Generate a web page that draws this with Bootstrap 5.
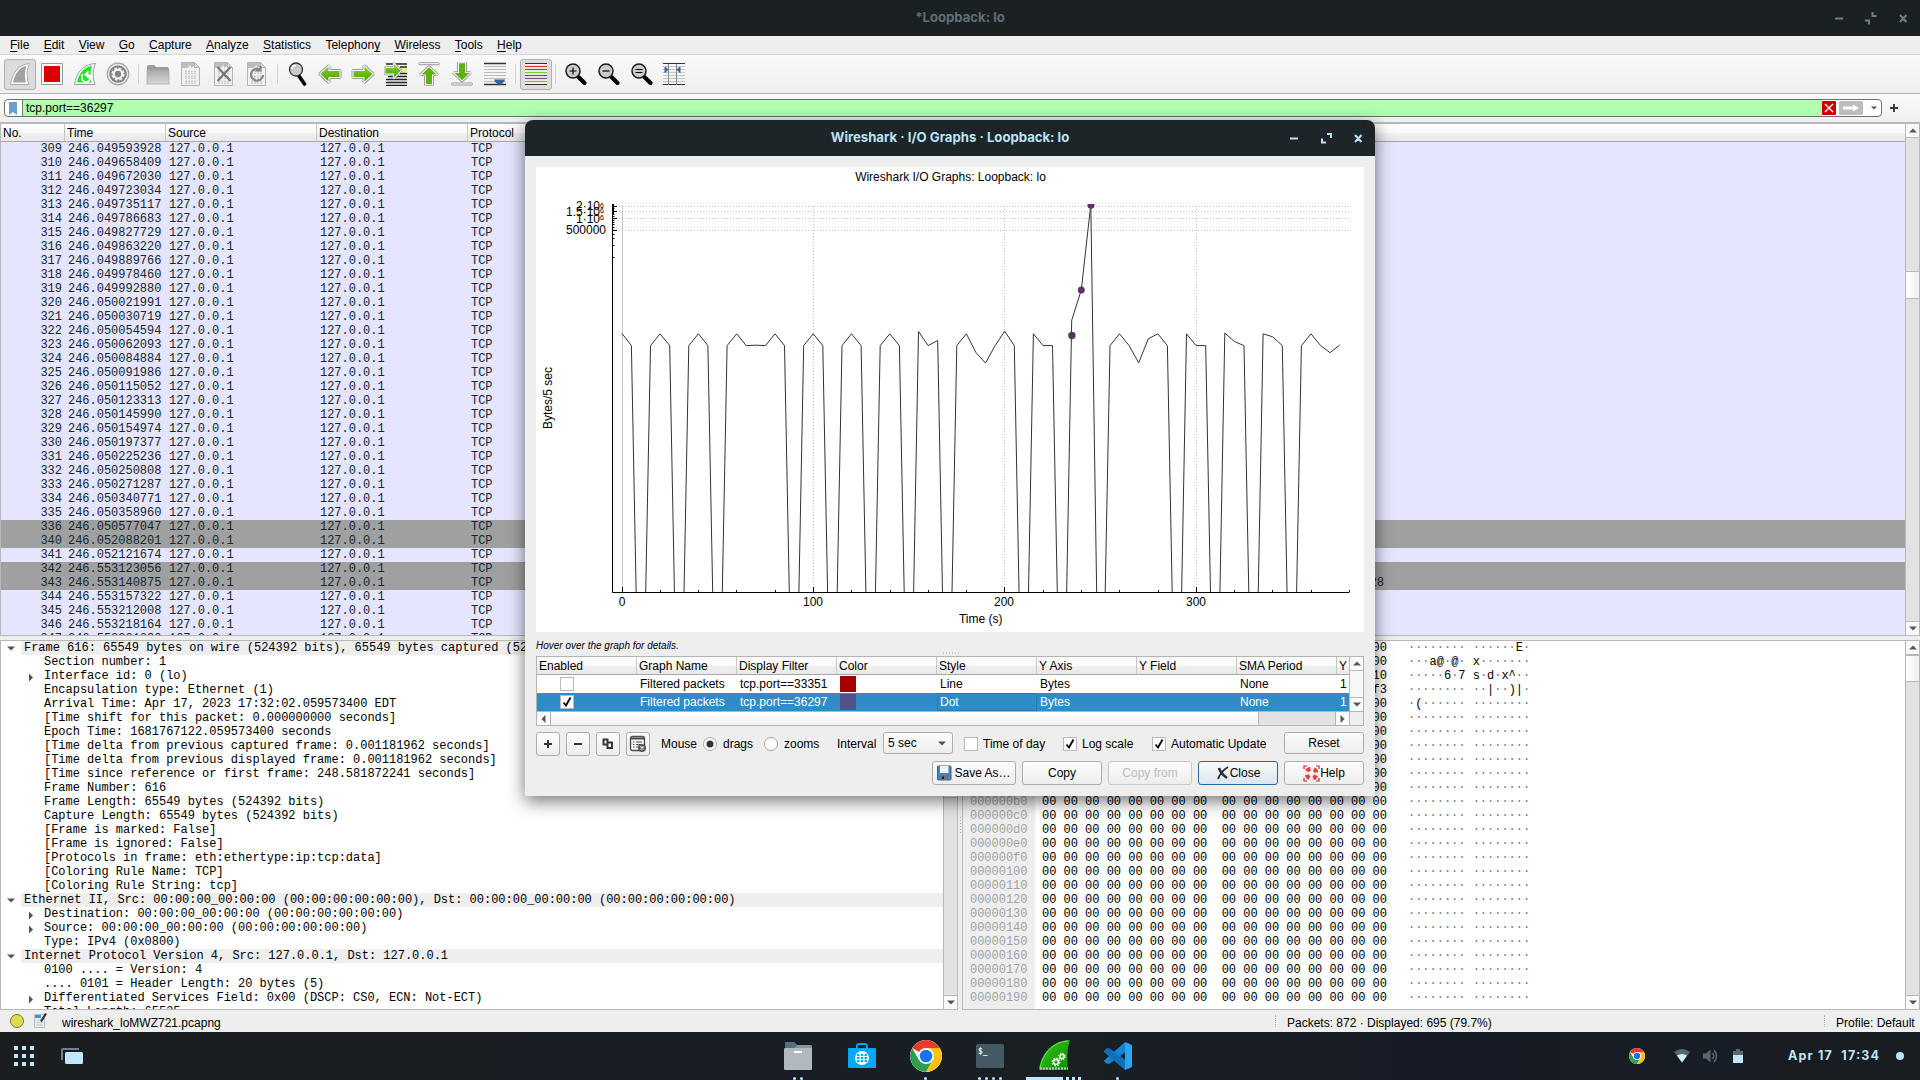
<!DOCTYPE html>
<html lang="en">
<head>
<meta charset="utf-8">
<title>Wireshark</title>
<link href="https://cdn.jsdelivr.net/npm/bootstrap@5.3.0/dist/css/bootstrap.min.css" rel="stylesheet">
<style>
html,body{height:1080px;overflow:hidden}
body{width:1920px;margin:0;background:#eee;color:#000;font:12px/14px "Liberation Sans",Arial,sans-serif;position:relative}
svg{display:block;flex:none}
.mono{font-family:"Liberation Mono","Courier New",monospace;white-space:pre;letter-spacing:-.014px}
.wm-bar{height:36px;background:#1b2023;color:#5d6f77;font:bold 13.150px/34px Inter,"Noto Sans",sans-serif;flex:none}
.wm-title{text-align:center}
.wm-btns{right:0;top:0;height:100%}
.menus{height:19px;padding:2px 0 0 10px;gap:14.300px;border-bottom:1px solid #d5d5d5;flex:none}
.menus u{text-underline-offset:2px}
.tools{height:39px;padding:4px 0 0 3px;background:linear-gradient(#fafafa,#eee);border-bottom:1px solid #b4b4b4;flex:none}
.tool{width:33px;height:31px;display:flex;align-items:center;justify-content:center;flex:none}
.tool svg{margin:-1px 1px 0 0}
.tool.down{width:32px;margin:0 0 0 1px;background:#dcdcdc;border:1px solid #b0b0b0;border-radius:3px}
.tsep{width:4px;height:20px;margin:5px 0 0 3px;border-left:1px solid #d2d2d2;flex:none}
.filterbar{height:30px;padding:5px 0 0 4px;background:linear-gradient(#fafafa,#f0f0f0);border-bottom:2px solid #b8b8b8;flex:none}
.field{width:1878px;height:18px;border:1px solid #6e6e6e;border-radius:4px;background:#fff;overflow:hidden}
.bm{width:18px;border-right:1px solid #777;flex:none}
.ftext{background:#afffaf;padding:1px 0 0 3px;width:1799px;flex:none}
.list{height:512px;border-left:1px solid #b8b8b8;border-bottom:1px solid #b8b8b8;flex:none}
.hdr{height:18px;background:linear-gradient(#fdfdfd,#fafafa 50%,#f0f0f0 52%,#e9e9e9);border-bottom:1px solid #a8a8a8;flex:none}
.hdr>div{border-right:1px solid #c6c6c6;padding:2px 0 0 2px;white-space:nowrap;overflow:hidden;flex:none}
.hdr>div:last-child{border-right:0}
.c1{width:64px}.c2{width:101px}.c3,.c4{width:151px}.c5{width:100px}
.c6{width:816px;text-align:right}
.prow{height:14px;background:#e5e5ff;color:#12272e;flex:none}
.prow.dim{background:#a0a0a0}
.prow .c1{text-align:right;padding-right:3px}
.prow .c2,.prow .c3,.prow .c4,.prow .c5{padding-left:3px}
.prow>div{flex:none}
.vscroll{width:15px;background:#e2e2e2;border:solid #b8b8b8;border-width:0 1px;flex:none}
.sbtn{height:14px;background:#fafafa;border-bottom:1px solid #b8b8b8;display:flex;align-items:center;justify-content:center;flex:none}
.sbtn.low{margin-top:auto;border-bottom:0;border-top:1px solid #b8b8b8}
.thumb{background:linear-gradient(90deg,#fff,#f0f0f0);border:solid #b8b8b8;border-width:1px 0;flex:none}
.panes{height:370px;margin-top:4px;flex:none}
.pane{background:#fff;border:1px solid #b8b8b8;border-right:0;overflow:hidden}
.trow{height:14px;padding-left:43px;position:relative}
.trow.top{padding-left:23px;background:linear-gradient(90deg,#fff 20px,#eee 20px)}
.trow svg{position:absolute;left:27px;top:4px}
.trow.top svg{left:6px;top:4px}
.gutter{width:72px;background:#eee;color:#a3a3a3;padding-left:7px}
.hexes{padding-left:7px}
.dots{color:#777}
.ascii{padding-left:21px}
.ascii b{color:#000;font-weight:400}
.status{height:22px;flex:none}
.dock{height:48px;background:#191e23;background-image:linear-gradient(90deg,#1a1e20,#181d25 40%,#1a1f24 55%,#171b25 75%,#191e22);color:#bfe6fb;flex:none}
.dsep{width:1px;height:12px;border-left:1px dotted #b0b0b0}
.dlg{left:525px;top:120px;width:850px;height:676px;background:#eee;border-radius:8px 8px 0 0;box-shadow:0 5px 18px rgba(0,0,0,.55);z-index:5}
.dlg .wm-bar{background:#1d2528;color:#b9e2f5;border-radius:8px 8px 0 0}
.plot{background:#fff;margin:11px 11px 0;height:465px;width:828px}
.plot text{font-family:"Liberation Sans",Arial,sans-serif;font-size:12px;fill:#000}
.hover{font-size:10px;font-style:italic;padding:7px 0 0 11px;height:24px}
.gtable{margin:0 11px;width:828px;height:70px;border:1px solid #b4b4b4;background:#fff;overflow:hidden}
.gtable .hdr>div{width:100px}
.grow{height:18px;line-height:18px}
.grow.sel{background:#308cc6;color:#fff}
.grow>div{width:100px;padding-left:3px;flex:none}
.cb{width:14px;height:14px;background:#fff;border:1px solid #b9b9b9;flex:none;display:flex;align-items:center;justify-content:center}
.sw{width:16px;height:16px;margin-top:1px}
.qbtn{background:linear-gradient(#fdfdfd,#ededed);border:1px solid #adadad;border-radius:3px;height:24px;width:80px;display:flex;align-items:center;justify-content:center;flex:none;white-space:nowrap}
.qbtn.sm{width:24px}
.radio{width:14px;height:14px;border-radius:50%;border:1px solid #a8a8a8;background:#fff;display:flex;align-items:center;justify-content:center;flex:none}
.lab{flex:none;white-space:nowrap}
.ctl{padding-left:11px;height:24px;margin-top:6px}
</style>
<script src="https://cdn.jsdelivr.net/npm/bootstrap@5.3.0/dist/js/bootstrap.bundle.min.js"></script>
</head>
<body class="d-flex flex-column">
<svg width="0" height="0" class="position-absolute">
 <defs>
  <linearGradient id="gr" x1="0" y1="0" x2="0" y2="1"><stop offset="0" stop-color="#8ad32a"/><stop offset="1" stop-color="#46a006"/></linearGradient>
  <linearGradient id="fin" x1="0" y1="0" x2="1" y2="1"><stop offset="0" stop-color="#2fc81a"/><stop offset="1" stop-color="#128a06"/></linearGradient>
  <linearGradient id="fold" x1="0" y1="0" x2="0" y2="1"><stop offset="0" stop-color="#a8a8a8"/><stop offset="1" stop-color="#d8d8d8"/></linearGradient>
  <g id="doc"><path d="M1.500.5h13l5 5v18h-18z" fill="#f2f2f2" stroke="#b4b4b4"/><path d="M2 1h12v3l-3 2 0-3-4 3H2z" fill="#bdbdbd"/><path d="M14.500 .5v5h5z" fill="#ddd" stroke="#b4b4b4"/><path d="M6 8.500v3.500M9 8.500v3.500M12 8.500v3.500M15 8.500v3.500M6 13.500v3.500M9 13.500v3.500M12 13.500v3.500M15 13.500v3.500M6 18.500v3.500M9 18.500v3.500M12 18.500v3.500M15 18.500v3.500" stroke="#c3c3c3" stroke-width="1.600" stroke-dasharray="1.500 .6"/></g>
  <g id="mag"><path d="M14.500 15l6 6" stroke="#000" stroke-width="4" stroke-linecap="round"/><circle cx="9" cy="9" r="7" fill="#ccc" stroke="#1a1a1a" stroke-width="1.500"/></g>
  <path id="arr" d="M2.500 12l8-7.500v4.500h11v6h-11v4.500z"/>
  <g id="chr"><circle cx="16" cy="16" r="16" fill="#fff"/><path d="M16 16L2.150 8A16 16 0 0 1 29.850 8H16z" fill="#e33b2e"/><path d="M2.150 8A16 16 0 0 0 16 32l6.900-12L9.100 20z" fill="#2da04e"/><path d="M29.850 8A16 16 0 0 1 16 32l6.930-12L16 8z" fill="#fcc20f"/><circle cx="16" cy="16" r="8" fill="#fff"/><circle cx="16" cy="16" r="6.300" fill="#1a73e8"/></g>
 </defs>
</svg>

<div class="wm-bar position-relative">
 <div class="wm-title">*Loopback: lo</div>
 <svg class="position-absolute wm-btns" width="100" height="36" viewBox="0 0 100 36" stroke="#6d8089" stroke-width="2" fill="none"><path d="M15 18.500h8M45 20.500h4v4M56.500 16h-4v-4M80 15l6.500 7M86.500 15L80 22"/></svg>
</div>
<div class="menus d-flex">
 <span><u>F</u>ile</span><span><u>E</u>dit</span><span><u>V</u>iew</span><span><u>G</u>o</span><span><u>C</u>apture</span><span><u>A</u>nalyze</span><span><u>S</u>tatistics</span><span>Telephon<u>y</u></span><span><u>W</u>ireless</span><span><u>T</u>ools</span><span><u>H</u>elp</span>
</div>
<div class="tools d-flex">
 <div class="tool down"><svg width="24" height="24"><path d="M2.500 22.500C4.500 10 11 2.500 21.500 1.500c-3 6-3 14-.5 21z" fill="#fff" stroke="#aaa"/><path d="M5 20.500C7 11 11.500 5.500 18.500 3.800c-2 5.500-2 11.500-.5 16.700z" fill="#a3a3a3"/></svg></div>
 <div class="tool"><svg width="24" height="24"><path d="M1.500 1.500h21v21h-21z" fill="#fff" stroke="#999"/><path d="M4 4h16v16H4z" fill="#d00"/></svg></div>
 <div class="tool"><svg width="24" height="24"><path d="M1.500 22.500C3.500 10 10 2.500 22.500 1.500c-3 6-3 14-.5 21z" fill="#fff" stroke="#999"/><path d="M4 20.500C6 11 10.500 5.500 19 3.800c-2 5.500-2 11.500-.5 16.700z" fill="#1fe51f"/><path d="M9 12v4a4 4 0 0 0 8 0c0-2-1.500-3.500-4-3.500M15.500 9.500l-3 3 3 3" fill="none" stroke="#fff" stroke-width="2.200"/></svg></div>
 <div class="tool"><svg width="24" height="24"><circle cx="12" cy="12" r="10.800" fill="#ececec" stroke="#a5a5a5" stroke-width="1.200"/><circle cx="12" cy="12" r="8.800" fill="#858585"/><circle cx="12" cy="12" r="5.300" fill="none" stroke="#f2f2f2" stroke-width="2.600" stroke-dasharray="2.600 1.560"/><circle cx="12" cy="12" r="4.200" fill="none" stroke="#f2f2f2" stroke-width="2"/></svg></div>
 <div class="tsep"></div>
 <div class="tool"><svg width="24" height="24"><path d="M1 5q0-2 2-2h5l2 2h11q2 0 2 2v14H1z" fill="#9c9c9c"/><path d="M1 8h22v14H1z" fill="url(#fold)" stroke="#a8a8a8" stroke-width=".7"/></svg></div>
 <div class="tool"><svg width="22" height="24"><use href="#doc"/></svg></div>
 <div class="tool"><svg width="22" height="24"><use href="#doc"/><path d="M4.500 5l13 14M17.500 5l-13 14" stroke="#777" stroke-width="2.200"/></svg></div>
 <div class="tool"><svg width="22" height="24"><use href="#doc"/><path d="M14 7.500a6 6 0 1 0 3 5.500M9.500 8.500h5V4" fill="none" stroke="#858585" stroke-width="2.200"/></svg></div>
 <div class="tsep"></div>
 <div class="tool"><svg width="24" height="24"><path d="M14 14l5.500 8" stroke="#000" stroke-width="3.600" stroke-linecap="round"/><circle cx="11" cy="7.500" r="6.500" fill="#c9c9c9" stroke="#333" stroke-width="1.300"/><path d="M7 7a4 4 0 0 1 4-3.500" stroke="#fff" stroke-width="1.500" fill="none"/></svg></div>
 <div class="tool"><svg width="24" height="24"><use href="#arr" stroke="#999" stroke-width="4" stroke-linejoin="round"/><use href="#arr" stroke="#fff" stroke-width="2"/><use href="#arr" fill="url(#gr)"/></svg></div>
 <div class="tool"><svg width="24" height="24"><g transform="matrix(-1 0 0 1 24 0)"><use href="#arr" stroke="#999" stroke-width="4" stroke-linejoin="round"/><use href="#arr" stroke="#fff" stroke-width="2"/><use href="#arr" fill="url(#gr)"/></g></svg></div>
 <div class="tool"><svg width="24" height="24"><path d="M2 2h21M2 17.500h21M2 20.500h21M2 23.500h21M4 14.500h19M16 5h7M16 11.500h7" stroke="#1e2426" stroke-width="1.300"/><path d="M16 6.500h7v3.500h-7z" fill="#fce94f"/><g transform="matrix(-.8 0 0 .9 18.500 -2)"><use href="#arr" stroke="#999" stroke-width="4" stroke-linejoin="round"/><use href="#arr" stroke="#fff" stroke-width="2"/><use href="#arr" fill="url(#gr)"/></g></svg></div>
 <div class="tool"><svg width="24" height="24"><g transform="matrix(0 .9 -1 0 24 3)"><use href="#arr" stroke="#999" stroke-width="4" stroke-linejoin="round"/><use href="#arr" stroke="#fff" stroke-width="2"/><use href="#arr" fill="#5db30c"/></g><rect x="1.500" y=".7" width="21" height="2" rx="1" fill="#fff" stroke="#999"/></svg></div>
 <div class="tool"><svg width="24" height="24"><g transform="matrix(0 -.9 1 0 0 20.500)"><use href="#arr" stroke="#999" stroke-width="4" stroke-linejoin="round"/><use href="#arr" stroke="#fff" stroke-width="2"/><use href="#arr" fill="#5db30c"/></g><rect x="1.500" y="21" width="21" height="2" rx="1" fill="#fff" stroke="#999"/></svg></div>
 <div class="tool"><svg width="24" height="24"><path d="M1 1.500h22M1 22.500h22" stroke="#2e3436" stroke-width="1.400"/><path d="M1 4.500h22M1 7.500h22M1 10.500h22M1 13.500h22M1 16.500h22M1 19.500h22" stroke="#bcbeb8" stroke-width="1"/><path d="M11 17.500h11l-1 2.500-4.500 3-4.500-3z" fill="#3465a4"/></svg></div>
 <div class="tsep"></div>
 <div class="tool down"><svg width="24" height="24" fill="none" stroke-width="1.200"><path d="M1 1h22v22H1z" fill="#f2f2f2"/><path d="M1 1.500h22M1 22.500h22" stroke="#2e3436"/><path d="M1 4.500h22" stroke="#ef2929"/><path d="M1 7.500h22" stroke="#3465a4"/><path d="M1 10.500h22" stroke="#73d216"/><path d="M1 13.500h22" stroke="#3465a4"/><path d="M1 16.500h22" stroke="#75507b"/><path d="M1 19.500h22" stroke="#c4a000"/></svg></div>
 <div class="tsep"></div>
 <div class="tool"><svg width="24" height="24"><use href="#mag" x="1"/><path d="M6.500 9h7M10 5.500v7" stroke="#000" stroke-width="1.200"/></svg></div>
 <div class="tool"><svg width="24" height="24"><use href="#mag" x="1"/><path d="M6.500 9h7" stroke="#000" stroke-width="1.200"/></svg></div>
 <div class="tool"><svg width="24" height="24"><use href="#mag" x="1"/><path d="M6.500 7.500h7M6.500 10.500h7" stroke="#000" stroke-width="1.200"/></svg></div>
 <div class="tool"><svg width="24" height="24"><path d="M1 4.500h22M1 7.500h22M1 10.500h22M1 13.500h22M1 16.500h22M1 19.500h22" stroke="#c6c8c2"/><path d="M1 1.500h22M1 22.500h22" stroke="#2e3436" stroke-width="1.200"/><path d="M6.500 2v21M14.500 2v21" stroke="#888a85"/><path d="M3 5l3 2.500-3 3zM18 5l-3 2.500 3 3z" fill="#3465a4" stroke="#3465a4"/></svg></div>
</div>
<div class="filterbar d-flex">
 <div class="field d-flex">
  <div class="bm"><svg width="17" height="16"><path d="M4 2h8v13l-4-3-4 3z" fill="#6f9bd1"/></svg></div>
  <div class="ftext">tcp.port==36297</div>
  <svg width="59" height="16"><rect x="0" y="1" width="14" height="14" rx="1" fill="#c00"/><path d="M3 4l8 8M11 4l-8 8" stroke="#fff" stroke-width="1.300"/><rect x="17" y="1" width="24" height="14" rx="1.500" fill="#bdbdbd"/><path d="M21 6.500h10v-2l6 3.500-6 3.500v-2H21z" fill="#fff"/><path d="M49 6.500h6l-3 3z" fill="#555"/></svg>
 </div>
 <svg width="20" height="18"><path d="M8 9h8M12 5v8" stroke="#3c3c3c" stroke-width="2"/></svg>
</div>

<div class="list d-flex">
 <div class="d-flex flex-column overflow-hidden" id="packets" style="width:1904px">
  <div class="hdr d-flex"><div class="c1">No.</div><div class="c2">Time</div><div class="c3">Source</div><div class="c4">Destination</div><div class="c5">Protocol</div></div>
 </div>
 <div class="vscroll d-flex flex-column">
  <div class="sbtn"><svg width="8" height="5"><path d="M0 4.500L4 .5l4 4z" fill="#555"/></svg></div>
  <div class="thumb" style="height:28px;margin-top:133px"></div>
  <div class="sbtn low"><svg width="8" height="5"><path d="M0 .5l4 4 4-4z" fill="#555"/></svg></div>
 </div>
</div>

<div class="panes d-flex">
 <div class="pane mono" id="tree" style="width:943px"></div>
 <div class="vscroll d-flex flex-column" style="border-top:1px solid #b8b8b8;border-bottom:1px solid #b8b8b8">
  <div class="sbtn"><svg width="8" height="5"><path d="M0 4.500L4 .5l4 4z" fill="#555"/></svg></div>
  <div class="thumb" style="height:143px"></div>
  <div class="sbtn low"><svg width="8" height="5"><path d="M0 .5l4 4 4-4z" fill="#555"/></svg></div>
 </div>
 <svg width="4" height="370"><path d="M2.500 177v18" stroke="#aaa" stroke-dasharray="1 2"/></svg>
 <div class="pane mono d-flex flex-fill">
  <div class="gutter" id="offs"></div><div class="hexes" id="hexes"></div><div class="ascii dots" id="ascii"></div>
 </div>
 <div class="vscroll d-flex flex-column" style="border-top:1px solid #b8b8b8;border-bottom:1px solid #b8b8b8">
  <div class="sbtn"><svg width="8" height="5"><path d="M0 4.500L4 .5l4 4z" fill="#555"/></svg></div>
  <div class="thumb" style="height:27px"></div>
  <div class="sbtn low"><svg width="8" height="5"><path d="M0 .5l4 4 4-4z" fill="#555"/></svg></div>
 </div>
</div>

<div class="status d-flex align-items-center">
 <svg width="62" height="22"><circle cx="17" cy="11" r="6.500" fill="#dcdc52" stroke="#7a7a3a"/><path d="M34.500 4.500h10v13h-10z" fill="#eef2f2" stroke="#b9bdbd"/><path d="M35 5h6v3h-6z" fill="#2f9bd8"/><path d="M36 10h6M36 12.500h7M36 15h7" stroke="#c4c4c4"/><path d="M46 3.500l-5 8" stroke="#333" stroke-width="2.200"/></svg>
 <div class="pt-1" style="width:1213px">wireshark_loMWZ721.pcapng</div>
 <div class="dsep"></div><div class="pt-1" style="width:548px;padding-left:11px">Packets: 872 · Displayed: 695 (79.7%)</div>
 <div class="dsep"></div><div class="pt-1" style="padding-left:11px">Profile: Default</div>
</div>

<div class="dock">
 <svg width="1920" height="48" viewBox="0 1032 1920 48">
  <path d="M14 1046h4v4h-4zM22 1046h4v4h-4zM30 1046h4v4h-4zM14 1054h4v4h-4zM22 1054h4v4h-4zM30 1054h4v4h-4zM14 1062h4v4h-4zM22 1062h4v4h-4zM30 1062h4v4h-4z" fill="#bfe6fb"/>
  <path d="M61 1060v-10q0-2 2-2h16v2H63v10z" fill="#6d828d"/><rect x="65" y="1052" width="18" height="12" rx="1.500" fill="#bfe6fb"/>
  <path d="M785 1050v-7q0-1 1-1h8l3 3h14q1 0 1 1v5z" fill="#8195a0"/><path d="M785 1048v-5q0-1 1-1h8l3 4-3 2z" fill="#546e7a"/><rect x="784" y="1048" width="28" height="22" rx="1" fill="#b0b9be"/><path d="M794 1052h8" stroke="#fff" stroke-width="2"/>
  <path d="M857 1050v-4q0-2 2-2h6q2 0 2 2v4" fill="none" stroke="#03a0ee" stroke-width="2"/><rect x="848" y="1048" width="28" height="20" rx="1" fill="#03a9f4"/><circle cx="862" cy="1058" r="7" fill="#fff"/><path d="M857 1055h10M857 1058h10M857 1061h10" stroke="#03a9f4" stroke-width="2" stroke-dasharray="2.500 1.250"/>
  <use href="#chr" x="910" y="1040"/>
  <rect x="976" y="1044" width="28" height="24" rx="1.500" fill="#455a64"/><text x="978" y="1054" font-family="DejaVu Sans Mono" font-size="8" font-weight="bold" fill="#eee">$_</text>
  <path d="M1039 1070c2-16 12-29 31-30-3 8-3 20-2 30z" fill="url(#fin)"/><path d="M1040 1068c3-15 13-26 28-27" stroke="#7fe25f" fill="none"/><path d="M1040 1068.500h28" stroke="#a7dc98" stroke-width="2" stroke-dasharray="2 1"/><g fill="none" stroke="#f4fff0" stroke-width="1.500"><circle cx="1056" cy="1062" r="2.400"/><circle cx="1062" cy="1056.500" r="2"/></g><g fill="none" stroke="#e8ffe0" stroke-width="1.400"><circle cx="1056" cy="1062" r="3.700" stroke-dasharray="1.500 1.400"/><circle cx="1062" cy="1056.500" r="3" stroke-dasharray="1.200 1.150"/></g>
  <path d="M1106 1050l22 19 2-2v-4l-21-15z" fill="#0b75bd"/><path d="M1106 1062l22-19 2 2v4l-21 15z" fill="#1385d2"/><path d="M1104 1061l3 3 18-13v-9l-21 18.500z" fill="#1384d0"/><path d="M1104 1051l3-3 18 13v9l-21-18z" fill="#0f70b5"/><path d="M1125 1042l7 3v22l-7 3z" fill="#2aa4f1"/>
  <g fill="#bfe6fb"><circle cx="794.500" cy="1078.500" r="1.500"/><circle cx="801.500" cy="1078.500" r="1.500"/><circle cx="925.500" cy="1078.500" r="1.500"/><circle cx="979.500" cy="1078.500" r="1.500"/><circle cx="986.500" cy="1078.500" r="1.500"/><circle cx="993.500" cy="1078.500" r="1.500"/><circle cx="1000.500" cy="1078.500" r="1.500"/><circle cx="1117.500" cy="1078.500" r="1.500"/><path d="M1026 1077h37v3h-37zM1066 1077h3v3h-3zM1072 1077h3v3h-3zM1078 1077h3v3h-3z"/></g>
  <use href="#chr" transform="translate(1629 1048) scale(.5)"/>
  <path d="M1674 1052q8-6 16 0l-8 10.500z" fill="#566873"/><path d="M1677 1055.500q5-3 10 0l-5 7z" fill="#d5f0ff"/>
  <path d="M1703 1053.500h3l4.500-4v13l-4.500-4h-3z" fill="#566873"/><path d="M1712.500 1053q2.500 3 0 6M1714 1050q5 6 0 12" fill="none" stroke="#566873" stroke-width="1.500"/>
  <path d="M1733 1051h3v-2h4v2h3v4h-10z" fill="#566873"/><path d="M1733 1055h10v8h-10z" fill="#bfe6fb"/>
  <text x="1788" y="1060" font-family="Inter" font-weight="700" font-size="12.500" fill="#bfe6fb" textLength="91" xml:space="preserve">Apr 17  17:34</text>
  <circle cx="1900" cy="1056" r="4" fill="#bfe6fb"/>
 </svg>
</div>

<div class="dlg position-absolute">
 <div class="wm-bar position-relative">
  <div class="wm-title">Wireshark · I/O Graphs · Loopback: lo</div>
  <svg class="position-absolute wm-btns" width="100" height="36" viewBox="0 0 100 36" stroke="#b9e2f5" stroke-width="2" fill="none"><path d="M15 18.500h8M47 18.500v4h4M52 14h4v4M80 15l6.500 7M86.500 15L80 22"/></svg>
 </div>
 <div class="plot"><svg id="plot" width="828" height="465" viewBox="536 167 828 465">
  <text x="950.500" y="181" text-anchor="middle">Wireshark I/O Graphs: Loopback: lo</text>
  <g stroke="#c3c3c3" stroke-dasharray="1 2"><path d="M613 206.500h736M613 211.500h736M613 218.500h736M613 230.500h736M813.500 206v386M1004.500 206v386M1196.500 206v386"/></g>
  <path d="M622.500 205v387" stroke="#c8c8c8"/>
  <g id="curve"></g>
  <path d="M612.500 204v388.500H1349.500" fill="none" stroke="#000"/>
  <path d="M613 204v11" stroke="#000" stroke-width="2"/>
  <path d="M612 206.500h5M612 211.500h5M612 218.500h5M612 230.500h5M612 208.500h2.500M612 214.500h2.500M612 216.500h2.500M612 220.500h2.500M612 222.500h2.500M612 224.500h2.500M612 227.500h2.500M612 234.500h2.500M612 238.500h2.500M612 245.500h2.500M612 257.500h2.500" stroke="#000"/>
  <g id="ticks" stroke="#000"></g>
  <text x="606" y="234" text-anchor="end">500000</text>
  <g text-anchor="end"><text x="600" y="210">2·10</text><text x="600" y="215.500">1.5·10</text><text x="600" y="222.500">1·10</text></g>
  <g id="exps"></g>
  <text x="622" y="606" text-anchor="middle">0</text><text x="813" y="606" text-anchor="middle">100</text><text x="1004" y="606" text-anchor="middle">200</text><text x="1196" y="606" text-anchor="middle">300</text>
  <text x="980.700" y="623" text-anchor="middle">Time (s)</text>
  <text transform="translate(552 398) rotate(-90)" text-anchor="middle">Bytes/5 sec</text>
 </svg></div>
 <div class="hover position-relative">Hover over the graph for details.<svg class="position-absolute" style="left:418px;top:20px" width="17" height="2"><path d="M0 1h17" stroke="#aaa" stroke-dasharray="1 2"/></svg></div>
 <div class="gtable d-flex flex-column">
  <div class="d-flex">
   <div style="width:812px" class="overflow-hidden">
    <div class="hdr d-flex"><div>Enabled</div><div>Graph Name</div><div>Display Filter</div><div>Color</div><div>Style</div><div>Y Axis</div><div>Y Field</div><div>SMA Period</div><div>Y</div></div>
    <div class="grow d-flex"><div style="padding:2px 0 0 23px"><div class="cb"></div></div><div>Filtered packets</div><div>tcp.port==33351</div><div><div class="sw" style="background:#a40000"></div></div><div>Line</div><div>Bytes</div><div></div><div>None</div><div>1</div></div>
    <div class="grow sel d-flex"><div style="padding:2px 0 0 23px"><div class="cb"><svg width="10" height="10"><path d="M1.500 5.500L4 8.500l4.500-8" fill="none" stroke="#000" stroke-width="1.800"/></svg></div></div><div>Filtered packets</div><div>tcp.port==36297</div><div><div class="sw" style="background:#525189"></div></div><div style="padding-left:2px;border:1px solid #2a7cb0;line-height:16px">Dot</div><div>Bytes</div><div></div><div>None</div><div>1</div></div>
   </div>
   <div class="vscroll d-flex flex-column" style="width:14px;border-right:0"><div class="sbtn"><svg width="8" height="5"><path d="M0 4.500L4 .5l4 4z" fill="#555"/></svg></div><div class="flex-fill" style="background:#f8f8f8"></div><div class="sbtn low"><svg width="8" height="5"><path d="M0 .5l4 4 4-4z" fill="#555"/></svg></div></div>
  </div>
  <div class="d-flex flex-fill" style="border-top:1px solid #b4b4b4;background:#e2e2e2">
   <div class="d-flex align-items-center justify-content-center" style="width:14px;background:#fafafa;border-right:1px solid #b4b4b4"><svg width="5" height="8"><path d="M4.500 0L.5 4l4 4z" fill="#555"/></svg></div>
   <div style="width:708px;background:linear-gradient(#fff,#f2f2f2);border-right:1px solid #b4b4b4"></div>
   <div style="width:76px"></div>
   <div class="d-flex align-items-center justify-content-center" style="width:15px;background:#fafafa;border:solid #b4b4b4;border-width:0 1px"><svg width="5" height="8"><path d="M.5 0l4 4-4 4z" fill="#555"/></svg></div>
   <div class="flex-fill" style="background:#eee"></div>
  </div>
 </div>
 <div class="ctl d-flex align-items-center">
  <div class="qbtn sm"><svg width="10" height="10"><path d="M1 5h8M5 1v8" stroke="#333" stroke-width="2"/></svg></div>
  <div class="qbtn sm" style="margin-left:6px"><svg width="10" height="10"><path d="M1 5h8" stroke="#333" stroke-width="2"/></svg></div>
  <div class="qbtn sm" style="margin-left:6px"><svg width="12" height="12"><path d="M1.500 1.500h4v5h-4zM5.500 4.500h4.500v5.500H5.500z" fill="none" stroke="#333" stroke-width="1.900"/></svg></div>
  <div class="qbtn sm" style="margin-left:6px"><svg width="18" height="18"><rect x="1.500" y="1.500" width="14" height="14" rx="2" fill="#f5f5f5" stroke="#4a4f50" stroke-width="1.400"/><path d="M2 3.500h13" stroke="#4a4f50" stroke-width="2"/><path d="M4 7h1.500M4 9.500h1.500M4 12h1.500M7 7h6M7 9.500h5M7 12h3" stroke="#4a4f50" stroke-width="1.200"/><circle cx="13" cy="13" r="4" fill="#555b5c"/><path d="M11.500 11.500l3 3M14.500 11.500l-3 3" stroke="#fff" stroke-width="1.200"/></svg></div>
  <div class="lab" style="width:42px;margin-left:11px">Mouse</div>
  <div class="radio"><svg width="8" height="8"><circle cx="4" cy="4" r="3.500" fill="#333"/></svg></div>
  <div class="lab" style="width:47px;padding-left:6px">drags</div>
  <div class="radio"></div>
  <div class="lab" style="width:59px;padding-left:6px">zooms</div>
  <div class="lab" style="width:46px">Interval</div>
  <div class="qbtn justify-content-start" style="width:70px;height:22px;margin-top:-2px;padding-left:4px">5 sec<svg class="ms-auto" width="14" height="5"><path d="M0 .5h8l-4 4z" fill="#555"/></svg></div>
  <div class="cb" style="margin-left:11px"></div><div class="lab" style="width:85px;padding-left:5px">Time of day</div>
  <div class="cb"><svg width="10" height="10"><path d="M1.500 5.500L4 8.500l4.500-8" fill="none" stroke="#000" stroke-width="1.800"/></svg></div><div class="lab" style="width:75px;padding-left:5px">Log scale</div>
  <div class="cb"><svg width="10" height="10"><path d="M1.500 5.500L4 8.500l4.500-8" fill="none" stroke="#000" stroke-width="1.800"/></svg></div><div class="lab" style="width:118px;padding-left:5px">Automatic Update</div>
  <div class="qbtn" style="height:22px;margin-top:-2px">Reset</div>
 </div>
 <div class="ctl d-flex justify-content-end" style="margin-top:5px;padding-right:11px;gap:6px">
  <div class="qbtn" style="width:84px"><svg width="15" height="16"><rect x=".5" y="1" width="13.500" height="14" rx="1" fill="#4f80b8" stroke="#33619c"/><path d="M3 1h8.500v7H3z" fill="#eef3f8"/><path d="M4 10.500h7V15H4z" fill="#6f6f6f"/><path d="M5 11.500h2V14H5z" fill="#222"/></svg><span style="padding-left:2px">Save As…</span></div>
  <div class="qbtn">Copy</div>
  <div class="qbtn" style="width:84px;color:#bcbcbc;border-color:#c6c6c6">Copy from</div>
  <div class="qbtn" style="border-color:#28699a;background:linear-gradient(#f6fafc,#dbe6ee)"><svg width="14" height="14"><path d="M3 2c1 4 4 7 8 10" fill="none" stroke="#2b2b2b" stroke-width="2.600"/><path d="M12 1C7 4 4 8 2 13" fill="none" stroke="#2b2b2b" stroke-width="1.800"/></svg><span>Close</span></div>
  <div class="qbtn"><svg width="17" height="17"><circle cx="8.500" cy="8.500" r="5" fill="none" stroke="#ececec" stroke-width="4"/><circle cx="8.500" cy="8.500" r="5" fill="none" stroke="#ef3b3b" stroke-width="4.200" stroke-dasharray="3.930 3.930" stroke-dashoffset="-1.960"/><path d="M1 4V1h3M13 1h3v3M16 13v3h-3M4 16H1v-3" fill="none" stroke="#c22" stroke-width="1.200"/></svg><span>Help</span></div>
 </div>
</div>

<script>
const packets = `309 246.049593928|310 246.049658409|311 246.049672030|312 246.049723034|313 246.049735117|314 246.049786683|315 246.049827729|316 246.049863220|317 246.049889766|318 246.049978460|319 246.049992880|320 246.050021991|321 246.050030719|322 246.050054594|323 246.050062093|324 246.050084884|325 246.050091986|326 246.050115052|327 246.050123313|328 246.050145990|329 246.050154974|330 246.050197377|331 246.050225236|332 246.050250808|333 246.050271287|334 246.050340771|335 246.050358960|336 246.050577047|340 246.052088201|341 246.052121674|342 246.553123056|343 246.553140875|344 246.553157322|345 246.553212008|346 246.553218164|347 246.553221380`.split('|');
const grey = ['336','340','342','343'];
document.getElementById('packets').insertAdjacentHTML('beforeend', packets.map(p => {
  const [n, t] = p.split(' ');
  return `<div class="prow mono d-flex${grey.includes(n) ? ' dim' : ''}"><div class="c1">${n}</div><div class="c2">${t}</div><div class="c3">127.0.0.1</div><div class="c4">127.0.0.1</div><div class="c5">TCP</div>${n === '343' ? '<div class="c6">28</div>' : ''}</div>`;
}).join(''));

// Detail tree: v = open top level, > = closed child, blank = leaf
const tree = `vFrame 616: 65549 bytes on wire (524392 bits), 65549 bytes captured (524392 bits)
 Section number: 1
>Interface id: 0 (lo)
 Encapsulation type: Ethernet (1)
 Arrival Time: Apr 17, 2023 17:32:02.059573400 EDT
 [Time shift for this packet: 0.000000000 seconds]
 Epoch Time: 1681767122.059573400 seconds
 [Time delta from previous captured frame: 0.001181962 seconds]
 [Time delta from previous displayed frame: 0.001181962 seconds]
 [Time since reference or first frame: 248.581872241 seconds]
 Frame Number: 616
 Frame Length: 65549 bytes (524392 bits)
 Capture Length: 65549 bytes (524392 bits)
 [Frame is marked: False]
 [Frame is ignored: False]
 [Protocols in frame: eth:ethertype:ip:tcp:data]
 [Coloring Rule Name: TCP]
 [Coloring Rule String: tcp]
vEthernet II, Src: 00:00:00_00:00:00 (00:00:00:00:00:00), Dst: 00:00:00_00:00:00 (00:00:00:00:00:00)
>Destination: 00:00:00_00:00:00 (00:00:00:00:00:00)
>Source: 00:00:00_00:00:00 (00:00:00:00:00:00)
 Type: IPv4 (0x0800)
vInternet Protocol Version 4, Src: 127.0.0.1, Dst: 127.0.0.1
 0100 .... = Version: 4
 .... 0101 = Header Length: 20 bytes (5)
>Differentiated Services Field: 0x00 (DSCP: CS0, ECN: Not-ECT)
 Total Length: 65535`.split('\n');
const open = '<svg width="8" height="7"><path d="M0 1.500h8l-4 4z" fill="#555"/></svg>';
const shut = '<svg width="6" height="9"><path d="M1 .5l4 4-4 4z" fill="#555"/></svg>';
document.getElementById('tree').innerHTML = tree.map(l => `<div class="trow${l[0] === 'v' ? ' top' : ''}">${l[0] === 'v' ? open : l[0] === '>' ? shut : ''}${l.slice(1)}</div>`).join('');

// Hex dump
const last = {2:'10', 3:'f3'};
const ascii = ['········ ······E·','···a@·@· x·······','·····6·7 s·d·x^··','········ ··|··)|·','·(······ ········'];
let o = '', h = '', a = '';
for (let r = 0; r < 26; r++) {
  o += `<div>${(r * 16).toString(16).padStart(8, '0')}</div>`;
  const b = Array(16).fill('00'); b[15] = last[r] || '00';
  h += `<div>${b.slice(0, 8).join(' ')}  ${b.slice(8).join(' ')}</div>`;
  a += `<div>${(ascii[r] || '········ ········').replace(/[^· ]+/g, '<b>$&</b>')}</div>`;
}
offs.innerHTML = o; hexes.innerHTML = h; document.getElementById('ascii').innerHTML = a;

// I/O curve: one level per 5 s interval; Z is an empty interval, far below the log axis
const A = 333.8, B = 345.6, Z = 839;
const lv = [333.2,B,Z,B,A,B,Z,B,A,B,Z,B,A,B,345.2,B,A,B,Z,B,A,B,Z,B,A,B,Z,B,A,B,Z,331.5,B,340.5,Z,B,A,352.700,363,B,331.2,B,Z,A,B,B,Z,320.3,289.9,204.5,Z,B,A,B,362.8,338.8,A,B,Z,A,B,B,Z,333,341.5,B,Z,A,336.8,B,Z,B,A,B,352.700,345];
const pts = lv.map((y, i) => `${(621.8 + i * 9.572).toFixed(1)},${y}`).join(' ');
curve.innerHTML = `<clipPath id="cp"><rect x="613" y="204" width="737" height="388"/></clipPath><g clip-path="url(#cp)"><polyline points="${pts}" fill="none" stroke="#2e3436" stroke-width="1"/><g fill="#5c3566"><circle cx="1071.900" cy="335.500" r="3.700"/><circle cx="1081.300" cy="289.900" r="3.500"/><circle cx="1091" cy="205.300" r="3.500"/></g></g>`;
let t = '';
for (let s = 0; s <= 380; s += 20) { const x = Math.floor(622 + s * 1.9144) + .5; t += `<path d="M${x} ${s % 100 ? 590 : 587}V592"/>`; }
ticks.innerHTML = t;
exps.innerHTML = [208, 213, 220].map(y => `<text x="600" y="${y}" style="font-size:7px">6</text>`).join('');
</script>
</body>
</html>
